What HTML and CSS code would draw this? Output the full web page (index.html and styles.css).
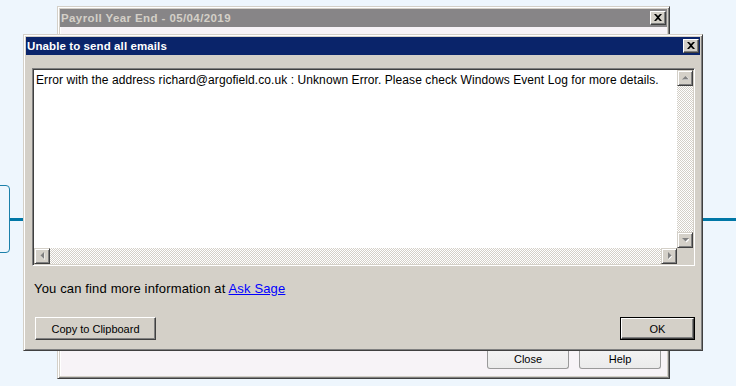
FILE: index.html
```html
<!DOCTYPE html>
<html>
<head>
<meta charset="utf-8">
<link rel="stylesheet" href="styles.css">
</head>
<body>
<div class="desk">
  <div class="flow-box"></div>
  <div class="flow-line line-left"></div>
  <div class="flow-line line-right"></div>

  <div class="win back">
    <div class="title inactive">
      <span class="title-text">Payroll Year End - 05/04/2019</span>
      <span class="xbtn"><svg width="8" height="7" viewBox="0 0 8 7"><path d="M0 0h2l2 2 2-2h2L5 3.5 8 7H6L4 5 2 7H0l3-3.5z" fill="#000"/></svg></span>
    </div>
    <div class="back-body">
      <div class="back-buttons">
        <span class="xp">Close</span>
        <span class="xp">Help</span>
      </div>
    </div>
  </div>

  <div class="win dlg">
    <div class="title active">
      <span class="title-text">Unable to send all emails</span>
      <span class="xbtn"><svg width="8" height="7" viewBox="0 0 8 7"><path d="M0 0h2l2 2 2-2h2L5 3.5 8 7H6L4 5 2 7H0l3-3.5z" fill="#000"/></svg></span>
    </div>
    <div class="dlg-body">
      <div class="textbox">
        <div class="tb-text">Error with the address richard@argofield.co.uk : Unknown Error. Please check Windows Event Log for more details.</div>
        <div class="vscroll">
          <span class="sbtn"><svg width="7" height="5" viewBox="0 0 7 5"><path d="M1 4h7L4.5 0.5z" fill="#fff"/><path d="M0 3.5h7L3.5 0z" fill="#808080"/></svg></span>
          <span class="track"></span>
          <span class="sbtn"><svg width="7" height="5" viewBox="0 0 7 5"><path d="M1 1h7L4.5 4.5z" fill="#fff"/><path d="M0 0h7L3.5 3.5z" fill="#808080"/></svg></span>
        </div>
        <div class="hscroll">
          <span class="sbtn"><svg width="5" height="8" viewBox="0 0 5 8"><path d="M4.5 1v7L1 4.5z" fill="#fff"/><path d="M4 0v7L0.5 3.5z" fill="#808080"/></svg></span>
          <span class="track"></span>
          <span class="sbtn"><svg width="5" height="8" viewBox="0 0 5 8"><path d="M1.5 1v7L5 4.5z" fill="#fff"/><path d="M1 0v7l3.5-3.5z" fill="#808080"/></svg></span>
        </div>
        <div class="corner"></div>
      </div>
      <p class="info">You can find more information at <a class="link" href="#">Ask Sage</a></p>
      <div class="btn-row">
        <span class="btn">Copy to Clipboard</span>
        <span class="btn default"><span class="btn-inner">OK</span></span>
      </div>
    </div>
  </div>
</div>
</body>
</html>
```
FILE: styles.css
```css
* { box-sizing: border-box; }
html, body { margin: 0; padding: 0; }
body {
  background: #eef6fd;
  font-family: "Liberation Sans", Arial, sans-serif;
  font-size: 12px;
  color: #000;
}
.desk {
  position: relative;
  width: 736px;
  height: 386px;
  overflow: hidden;
}
.flow-box {
  position: absolute;
  left: -6px;
  top: 185px;
  width: 16px;
  height: 68px;
  border: 1px solid #1b80aa;
  border-radius: 4px;
}
.flow-line {
  position: absolute;
  top: 218px;
  height: 3px;
  background: #0077a6;
}
.line-left { left: 10px; width: 14px; }
.line-right { left: 703px; width: 33px; }

.win {
  position: absolute;
  display: flex;
  flex-direction: column;
  background: #d4d0c8;
  border: 1px solid;
  border-color: #d4d0c8 #404040 #404040 #d4d0c8;
  box-shadow: inset 1px 1px #fff, inset -1px -1px #808080;
  padding: 2px;
}
.back { left: 57px; top: 6px; width: 613px; height: 373px; }
.dlg { left: 23px; top: 34px; width: 680px; height: 317px; }

.title {
  height: 18px;
  flex: none;
  display: flex;
  align-items: center;
  justify-content: space-between;
  padding: 0 2px 0 1px;
  font-weight: bold;
  font-size: 11.5px;
}
.title.inactive { background: #878587; color: #d4d0c8; }
.title.active { background: #0a246a; color: #fff; }
.title-text { letter-spacing: 0.1px; }
.inactive .title-text { letter-spacing: 0.4px; }
.xbtn {
  width: 16px;
  height: 14px;
  display: flex;
  align-items: center;
  justify-content: center;
  background: #d4d0c8;
  border: 1px solid;
  border-color: #fff #404040 #404040 #fff;
  box-shadow: inset -1px -1px #808080;
  margin-top: -1px;
  margin-right: -1px;
}

.back-body {
  flex: 1;
  background: #f7f3f7;
  border-left: 1px solid #ffffff;
  display: flex;
  flex-direction: column;
  justify-content: flex-end;
  padding: 0 6px 7px 0;
}
.back-buttons {
  display: flex;
  justify-content: flex-end;
  gap: 10px;
}
.xp {
  width: 82px;
  height: 23px;
  display: flex;
  align-items: flex-end;
  justify-content: center;
  padding-bottom: 3px;
  background: linear-gradient(#f4f4f4, #ebebeb);
  border: 1px solid #9a9a9a;
  border-top-color: #c8c8c8;
  border-radius: 3px;
  font-size: 11px;
}

.dlg-body {
  flex: 1;
  display: flex;
  flex-direction: column;
  padding: 13px 5px 0 6px;
}
.textbox {
  width: 663px;
  height: 198px;
  display: grid;
  grid-template-columns: 1fr 16px;
  grid-template-rows: 1fr 16px;
  background: #fff;
  border: 1px solid;
  border-color: #808080 #fff #fff #808080;
  box-shadow: inset 1px 1px #404040, inset -1px -1px #d4d0c8;
  padding: 1px;
}
.tb-text {
  padding: 3px 0 0 2px;
  line-height: 14px;
  font-size: 12px;
  letter-spacing: 0.08px;
  white-space: nowrap;
  overflow: hidden;
}
.vscroll {
  display: flex;
  flex-direction: column;
}
.hscroll {
  display: flex;
}
.track {
  flex: 1;
  background: repeating-conic-gradient(#d4d0c8 0 25%, #fff 0 50%) 0 0 / 2px 2px;
}
.sbtn {
  width: 16px;
  height: 16px;
  flex: none;
  display: flex;
  align-items: center;
  justify-content: center;
  background: #d4d0c8;
  border: 1px solid;
  border-color: #d4d0c8 #404040 #404040 #d4d0c8;
  box-shadow: inset 1px 1px #fff, inset -1px -1px #808080;
}
.corner { background: #d4d0c8; }

.info {
  margin: 15px 0 0 2px;
  line-height: 15px;
  font-size: 13px;
  letter-spacing: 0.15px;
}
.link { color: #0000ff; text-decoration: underline; }

.btn-row {
  display: flex;
  justify-content: space-between;
  margin-top: 21px;
  padding: 0 0 0 3px;
}
.btn {
  height: 23px;
  display: flex;
  align-items: center;
  justify-content: center;
  background: #d4d0c8;
  border: 1px solid;
  border-color: #fff #404040 #404040 #fff;
  box-shadow: inset -1px -1px #808080;
  font-size: 11px;
  width: 121px;
}
.btn.default {
  width: 75px;
  border: 1px solid #000;
  box-shadow: none;
  padding: 0;
}
.btn-inner {
  width: 100%;
  height: 100%;
  display: flex;
  align-items: center;
  justify-content: center;
  border: 1px solid;
  border-color: #fff #404040 #404040 #fff;
  box-shadow: inset -1px -1px #808080;
}
```
